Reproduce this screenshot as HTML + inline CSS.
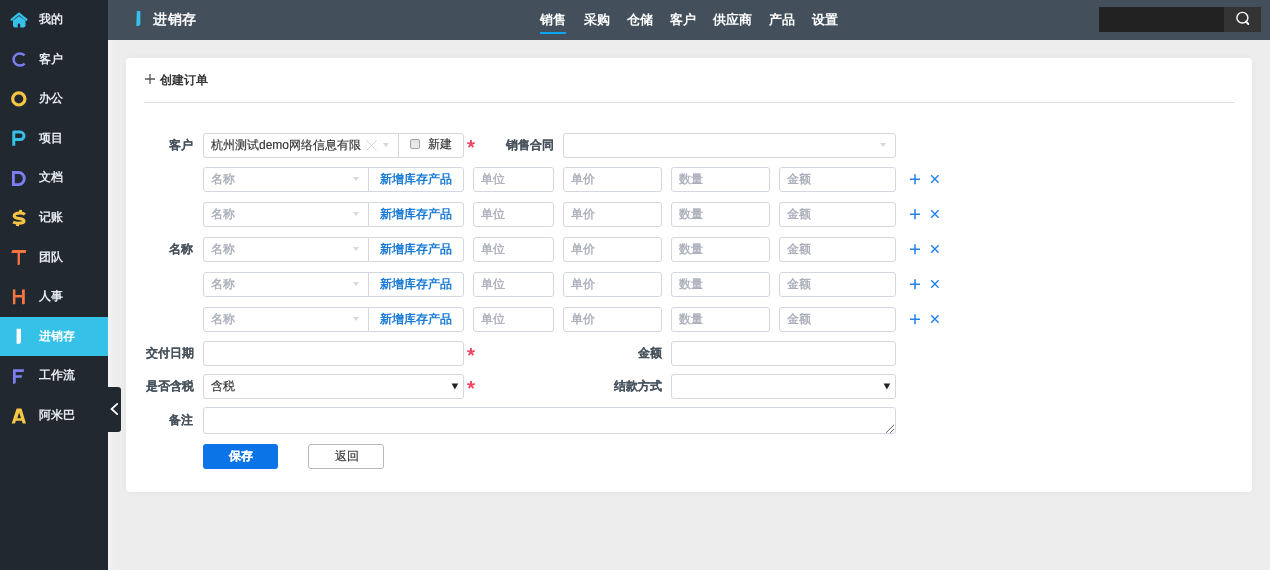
<!DOCTYPE html>
<html><head><meta charset="utf-8">
<style>
*{box-sizing:border-box;margin:0;padding:0}
html,body{width:1270px;height:570px;overflow:hidden;background:#ededed;font-family:"Liberation Sans",sans-serif;font-size:12px;color:#333}
.side{position:absolute;left:0;top:0;width:108px;height:570px;background:#222830}
.side .it{position:absolute;left:0;width:108px;height:39.6px}
.side .it .ic{position:absolute;left:10px;top:10.5px;width:18px;height:18px}
.side .it .ic svg{display:block}
.side .it .tx{position:absolute;left:39px;top:12px;font-size:12px;font-weight:bold;color:#e6e9f0;line-height:14px;white-space:nowrap}
.side .it.act{background:#35c1e8}
.side .it.act .tx{color:#fff}
.toggle{position:absolute;left:108px;top:387px;width:13px;height:45px;background:#222830;border-radius:0 3px 3px 0}
.hdr{position:absolute;left:108px;top:0;width:1162px;height:40px;background:#434f5a}
.hdr .bar{position:absolute;left:28.5px;top:11px;width:4px;height:15px;background:#35c1e8;border-radius:0 0 0 2.5px}
.hdr .title{position:absolute;left:45px;top:10px;font-size:14px;font-weight:500;color:#fff;-webkit-text-stroke:0.5px #fff;letter-spacing:0.6px;line-height:18px}
.nav{position:absolute;top:12px;font-size:13px;font-weight:bold;color:#fff;line-height:16px;white-space:nowrap}
.uline{position:absolute;left:540px;top:31.5px;width:26px;height:2.2px;background:#08a4f6}
.search{position:absolute;left:1099px;top:7px;width:125px;height:25px;background:#222}
.sbtn{position:absolute;left:1224px;top:7px;width:37px;height:25px;background:#333}
.card{position:absolute;left:126px;top:58px;width:1126px;height:434px;background:#fff;border-radius:4px;box-shadow:0 0 6px rgba(0,0,0,0.04)}
.ctitle{position:absolute;left:160px;top:72px;font-size:12px;font-weight:bold;color:#333;line-height:16px}
.hr{position:absolute;left:144px;top:102px;width:1090px;height:1px;background:#d8dce4}
.lbl{position:absolute;-webkit-text-stroke-width:0.05px;font-size:12px;font-weight:bold;color:#47525c;text-align:right;line-height:14px;white-space:nowrap}
.box{position:absolute;-webkit-text-stroke-width:0.15px;height:25px;border:1px solid #d3d7e0;border-radius:3px;background:#fff;font-size:12px;line-height:23px;padding-left:7px;color:#333;white-space:nowrap;overflow:hidden}
.box.ph{color:#a9adb8;-webkit-text-stroke-width:0.35px;line-height:22px}
.box.blue{color:#1a7bd6;font-weight:bold;-webkit-text-stroke-width:0;padding-left:0;text-align:center}
.tri{position:absolute;top:9.4px;width:0;height:0;border-left:3.5px solid transparent;border-right:3.5px solid transparent;border-top:4px solid #d6d8dc}
.dtri{position:absolute;top:8px;font-size:10px;color:#222}
.star{position:absolute;color:#f0365a;font-size:14px;font-weight:bold;line-height:14px}
.pm{position:absolute}
.btn{position:absolute;-webkit-text-stroke-width:0.15px;height:25px;border-radius:3px;font-size:12px;line-height:23px;text-align:center}
</style></head><body>
<div id="root" style="position:absolute;left:0;top:0;width:1270px;height:570px;will-change:transform;background:#ededed">
<div style="position:absolute;left:108px;top:40px;width:8px;height:530px;background:linear-gradient(90deg,#f3f3f3,#ededed)"></div>
<div class="side">
<div class="it" style="top:0.0px"><div class="ic"><svg width="18" height="18" viewBox="0 0 18 18"><path d="M1.7 8.7 L9 2.6 L16.3 8.7" fill="none" stroke="#35c1e8" stroke-width="2.3" stroke-linecap="round" stroke-linejoin="round"/><path d="M3 9.6 L9 5 L15.5 9.6 V14.6 Q15.5 16.4 13.7 16.4 H10.2 V13.8 A1.25 1.4 0 0 0 7.7 13.8 V16.4 H4.8 Q3 16.4 3 14.6 Z" fill="#35c1e8"/></svg></div><div class="tx">我的</div></div>
<div class="it" style="top:39.6px"><div class="ic"><svg width="18" height="18" viewBox="0 0 18 18"><path d="M14.58 5.42 A6.3 6.1 0 1 0 14.58 13.58" fill="none" stroke="#7b7ff2" stroke-width="2.5"/></svg></div><div class="tx">客户</div></div>
<div class="it" style="top:79.2px"><div class="ic"><svg width="18" height="18" viewBox="0 0 18 18"><circle cx="8.8" cy="8.9" r="6.1" fill="none" stroke="#f6c544" stroke-width="3.2"/></svg></div><div class="tx">办公</div></div>
<div class="it" style="top:118.8px"><div class="ic"><svg width="18" height="18" viewBox="0 0 18 18"><path d="M3.75 16.7 V3.1 H10.25 A3.75 3.75 0 0 1 10.25 10.6 H3.75" fill="none" stroke="#35c1e8" stroke-width="3" stroke-linejoin="round"/></svg></div><div class="tx">项目</div></div>
<div class="it" style="top:158.4px"><div class="ic"><svg width="18" height="18" viewBox="0 0 18 18"><path d="M3.4 3.5 H8.7 A5.6 6.05 0 0 1 8.7 15.6 H3.4 Z" fill="none" stroke="#7b7ff2" stroke-width="2.9" stroke-linejoin="miter"/></svg></div><div class="tx">文档</div></div>
<div class="it" style="top:198.0px"><div class="ic"><svg width="18" height="18" viewBox="0 0 18 18"><path d="M14.9 5.4 C13.8 4.4 12 4 9.9 4 C6.6 4 4.2 5.2 4.2 7.1 C4.2 9.2 8 9.3 10.6 9.8 C13 10.3 14 11 14 12.2 C14 13.7 11.4 14.2 8.6 14.2 C6.6 14.2 4.6 13.9 3.1 13.2" fill="none" stroke="#f6c544" stroke-width="3.1" stroke-linecap="butt"/><path d="M10.7 0.8 L10.4 4.5 M7.9 13.8 L7.5 17.2" stroke="#f6c544" stroke-width="2.9" stroke-linecap="butt"/></svg></div><div class="tx">记账</div></div>
<div class="it" style="top:237.6px"><div class="ic"><svg width="18" height="18" viewBox="0 0 18 18"><path d="M2.4 1.9 H16.4 L15.6 5 H1.2 Z" fill="#f5773f"/><path d="M7.6 4 H9.9 V15.7 Q9.9 16.9 8.7 16.9 H7.6 Z" fill="#f5773f"/></svg></div><div class="tx">团队</div></div>
<div class="it" style="top:277.2px"><div class="ic"><svg width="18" height="18" viewBox="0 0 18 18"><path d="M2.9 1.4 H5.4 V16.2 H2.9 Z M12 1.4 H14.8 V15.3 Q14.8 16.2 13.9 16.2 H12 Z M4 7.1 H13 V9.5 H4 Z" fill="#f5773f"/></svg></div><div class="tx">人事</div></div>
<div class="it act" style="top:316.8px"><div class="ic"><svg width="18" height="18" viewBox="0 0 18 18"><path d="M6.6 1.7 H11 V14.7 Q11 16.7 9 16.7 H6.6 Z" fill="#ffffff"/></svg></div><div class="tx">进销存</div></div>
<div class="it" style="top:356.4px"><div class="ic"><svg width="18" height="18" viewBox="0 0 18 18"><path d="M3 2.3 H14.2 L13.6 5.1 H5.7 V8.2 H12.1 L11.6 10.7 H5.7 V15.6 Q5.7 16.7 4.6 16.7 H3 Z" fill="#7b7ff2"/></svg></div><div class="tx">工作流</div></div>
<div class="it" style="top:396.0px"><div class="ic"><svg width="18" height="18" viewBox="0 0 18 18"><path d="M6.6 1.5 H11.5 L16 16.5 H12.7 L11.9 13.7 H5.9 L5 16.5 H1.7 Z M7.3 11.2 H11 L9.15 5.4 Z" fill="#f6c544" fill-rule="evenodd"/></svg></div><div class="tx">阿米巴</div></div>
</div>
<div class="toggle"><svg width="13" height="45" viewBox="0 0 13 45"><path d="M9.2 16.9 L3.6 22 L9.2 27.1" fill="none" stroke="#fff" stroke-width="1.8" stroke-linecap="round" stroke-linejoin="miter"/></svg></div>
<div class="hdr">
  <svg style="position:absolute;left:28px;top:11px" width="6" height="16" viewBox="0 0 6 16"><path d="M0.8 0 H4.4 V12.4 Q4.3 15 1.8 15.1 H0.3 Z" fill="#35c1e8"/></svg>
  <div class="title">进销存</div>
</div>
<div class="nav" style="left:540px">销售</div>
<div class="nav" style="left:584px">采购</div>
<div class="nav" style="left:627px">仓储</div>
<div class="nav" style="left:670px">客户</div>
<div class="nav" style="left:713px">供应商</div>
<div class="nav" style="left:769px">产品</div>
<div class="nav" style="left:812px">设置</div>
<div class="uline"></div>
<div class="search"></div>
<div class="sbtn"><svg width="37" height="25" viewBox="0 0 37 25"><ellipse cx="18.4" cy="10.7" rx="5.5" ry="5.35" fill="none" stroke="#fff" stroke-width="1.45"/><path d="M22 14.6 L24.3 17" stroke="#fff" stroke-width="1.9" stroke-linecap="round"/></svg></div>
<div class="card"></div>
<svg style="position:absolute;left:145px;top:74px" width="10" height="10" viewBox="0 0 10 10"><path d="M5 0 V10 M0 5 H10" stroke="#555" stroke-width="1.3"/></svg>
<div class="ctitle">创建订单</div>
<div class="hr"></div>

<div class="lbl" style="right:1077px;top:138px">客户</div>
<div class="box" style="left:203px;top:133px;width:196px;border-radius:3px 0 0 3px">杭州测试demo网络信息有限<svg style="position:absolute;left:161.5px;top:6px" width="11" height="11" viewBox="0 0 11 11"><path d="M0.5 0.5 L10.5 10.5 M10.5 0.5 L0.5 10.5" stroke="#d0d0d0" stroke-width="0.9"/></svg><span class="tri" style="left:179px"></span></div>
<div class="box" style="left:398px;top:133px;width:66px;border-radius:0 3px 3px 0;padding-left:0"><span style="position:absolute;left:11px;top:5px;width:10px;height:10px;border:1px solid #a4a4a4;border-radius:2px;background:linear-gradient(#e4e4e4,#ececec)"></span><span style="position:absolute;left:29px;top:-1.5px">新建</span></div>
<svg style="position:absolute;left:466px;top:139.4px" width="10" height="10" viewBox="0 0 10 10"><path d="M5 5 V1 M5 5 L8.7 3.8 M5 5 L7.3 8.2 M5 5 L2.7 8.2 M5 5 L1.3 3.8" stroke="#f24868" stroke-width="1.9"/></svg>
<div class="lbl" style="right:716px;top:138px">销售合同</div>
<div class="box" style="left:563px;top:133px;width:333px"><span class="tri" style="left:316px"></span></div>

<div class="lbl" style="right:1077px;top:242px">名称</div>
<div class="box ph" style="left:203px;top:167px;width:166px;border-radius:3px 0 0 3px">名称<span class="tri" style="left:149px"></span></div>
<div class="box blue" style="left:368px;top:167px;width:96px;border-radius:0 3px 3px 0">新增库存产品</div>
<div class="box ph" style="left:473px;top:167px;width:81px">单位</div>
<div class="box ph" style="left:563px;top:167px;width:99px">单价</div>
<div class="box ph" style="left:671px;top:167px;width:99px">数量</div>
<div class="box ph" style="left:779px;top:167px;width:117px">金额</div>
<svg class="pm" style="left:909px;top:173px" width="12" height="12" viewBox="0 0 12 12"><path d="M6 1.2 V11.2 M1 6.2 H11" stroke="#2583e6" stroke-width="1.55"/></svg>
<svg class="pm" style="left:929px;top:173px" width="12" height="12" viewBox="0 0 12 12"><path d="M2.2 2.3 L9.6 9.7 M9.6 2.3 L2.2 9.7" stroke="#1f80e8" stroke-width="1.35"/></svg>
<div class="box ph" style="left:203px;top:202px;width:166px;border-radius:3px 0 0 3px">名称<span class="tri" style="left:149px"></span></div>
<div class="box blue" style="left:368px;top:202px;width:96px;border-radius:0 3px 3px 0">新增库存产品</div>
<div class="box ph" style="left:473px;top:202px;width:81px">单位</div>
<div class="box ph" style="left:563px;top:202px;width:99px">单价</div>
<div class="box ph" style="left:671px;top:202px;width:99px">数量</div>
<div class="box ph" style="left:779px;top:202px;width:117px">金额</div>
<svg class="pm" style="left:909px;top:208px" width="12" height="12" viewBox="0 0 12 12"><path d="M6 1.2 V11.2 M1 6.2 H11" stroke="#2583e6" stroke-width="1.55"/></svg>
<svg class="pm" style="left:929px;top:208px" width="12" height="12" viewBox="0 0 12 12"><path d="M2.2 2.3 L9.6 9.7 M9.6 2.3 L2.2 9.7" stroke="#1f80e8" stroke-width="1.35"/></svg>
<div class="box ph" style="left:203px;top:237px;width:166px;border-radius:3px 0 0 3px">名称<span class="tri" style="left:149px"></span></div>
<div class="box blue" style="left:368px;top:237px;width:96px;border-radius:0 3px 3px 0">新增库存产品</div>
<div class="box ph" style="left:473px;top:237px;width:81px">单位</div>
<div class="box ph" style="left:563px;top:237px;width:99px">单价</div>
<div class="box ph" style="left:671px;top:237px;width:99px">数量</div>
<div class="box ph" style="left:779px;top:237px;width:117px">金额</div>
<svg class="pm" style="left:909px;top:243px" width="12" height="12" viewBox="0 0 12 12"><path d="M6 1.2 V11.2 M1 6.2 H11" stroke="#2583e6" stroke-width="1.55"/></svg>
<svg class="pm" style="left:929px;top:243px" width="12" height="12" viewBox="0 0 12 12"><path d="M2.2 2.3 L9.6 9.7 M9.6 2.3 L2.2 9.7" stroke="#1f80e8" stroke-width="1.35"/></svg>
<div class="box ph" style="left:203px;top:272px;width:166px;border-radius:3px 0 0 3px">名称<span class="tri" style="left:149px"></span></div>
<div class="box blue" style="left:368px;top:272px;width:96px;border-radius:0 3px 3px 0">新增库存产品</div>
<div class="box ph" style="left:473px;top:272px;width:81px">单位</div>
<div class="box ph" style="left:563px;top:272px;width:99px">单价</div>
<div class="box ph" style="left:671px;top:272px;width:99px">数量</div>
<div class="box ph" style="left:779px;top:272px;width:117px">金额</div>
<svg class="pm" style="left:909px;top:278px" width="12" height="12" viewBox="0 0 12 12"><path d="M6 1.2 V11.2 M1 6.2 H11" stroke="#2583e6" stroke-width="1.55"/></svg>
<svg class="pm" style="left:929px;top:278px" width="12" height="12" viewBox="0 0 12 12"><path d="M2.2 2.3 L9.6 9.7 M9.6 2.3 L2.2 9.7" stroke="#1f80e8" stroke-width="1.35"/></svg>
<div class="box ph" style="left:203px;top:307px;width:166px;border-radius:3px 0 0 3px">名称<span class="tri" style="left:149px"></span></div>
<div class="box blue" style="left:368px;top:307px;width:96px;border-radius:0 3px 3px 0">新增库存产品</div>
<div class="box ph" style="left:473px;top:307px;width:81px">单位</div>
<div class="box ph" style="left:563px;top:307px;width:99px">单价</div>
<div class="box ph" style="left:671px;top:307px;width:99px">数量</div>
<div class="box ph" style="left:779px;top:307px;width:117px">金额</div>
<svg class="pm" style="left:909px;top:313px" width="12" height="12" viewBox="0 0 12 12"><path d="M6 1.2 V11.2 M1 6.2 H11" stroke="#2583e6" stroke-width="1.55"/></svg>
<svg class="pm" style="left:929px;top:313px" width="12" height="12" viewBox="0 0 12 12"><path d="M2.2 2.3 L9.6 9.7 M9.6 2.3 L2.2 9.7" stroke="#1f80e8" stroke-width="1.35"/></svg>

<div class="lbl" style="right:1076px;top:346px">交付日期</div>
<div class="box" style="left:203px;top:341px;width:261px"></div>
<svg style="position:absolute;left:466px;top:347.4px" width="10" height="10" viewBox="0 0 10 10"><path d="M5 5 V1 M5 5 L8.7 3.8 M5 5 L7.3 8.2 M5 5 L2.7 8.2 M5 5 L1.3 3.8" stroke="#f24868" stroke-width="1.9"/></svg>
<div class="lbl" style="right:608px;top:346px">金额</div>
<div class="box" style="left:671px;top:341px;width:225px"></div>

<div class="lbl" style="right:1076px;top:379px">是否含税</div>
<div class="box" style="left:203px;top:374px;width:261px">含税<svg style="position:absolute;left:247.4px;top:8px" width="8" height="7" viewBox="0 0 8 7"><path d="M0.6 0.6 H7.2 L3.9 6.4 Z" fill="#222"/></svg></div>
<svg style="position:absolute;left:466px;top:380.4px" width="10" height="10" viewBox="0 0 10 10"><path d="M5 5 V1 M5 5 L8.7 3.8 M5 5 L7.3 8.2 M5 5 L2.7 8.2 M5 5 L1.3 3.8" stroke="#f24868" stroke-width="1.9"/></svg>
<div class="lbl" style="right:608px;top:379px">结款方式</div>
<div class="box" style="left:671px;top:374px;width:225px"><svg style="position:absolute;left:211.2px;top:8px" width="8" height="7" viewBox="0 0 8 7"><path d="M0.6 0.6 H7.2 L3.9 6.4 Z" fill="#222"/></svg></div>

<div class="lbl" style="right:1077px;top:413px">备注</div>
<div class="box" style="left:203px;top:407px;width:693px;height:27px"><svg style="position:absolute;left:681px;top:15px" width="10" height="11" viewBox="0 0 10 11"><path d="M1 9.8 L9 1.9 M5.2 9.8 L9 6.1" stroke="#4a4a4a" stroke-width="0.9"/></svg></div>

<div class="btn" style="left:203px;top:444px;width:75px;background:#0b74e6;color:#fff;font-weight:bold;line-height:25px">保存</div>
<div class="btn" style="left:308px;top:444px;width:76px;border:1px solid #b8b8b8;background:#fff;color:#333;padding-left:2px">返回</div>
</div>
</body></html>
